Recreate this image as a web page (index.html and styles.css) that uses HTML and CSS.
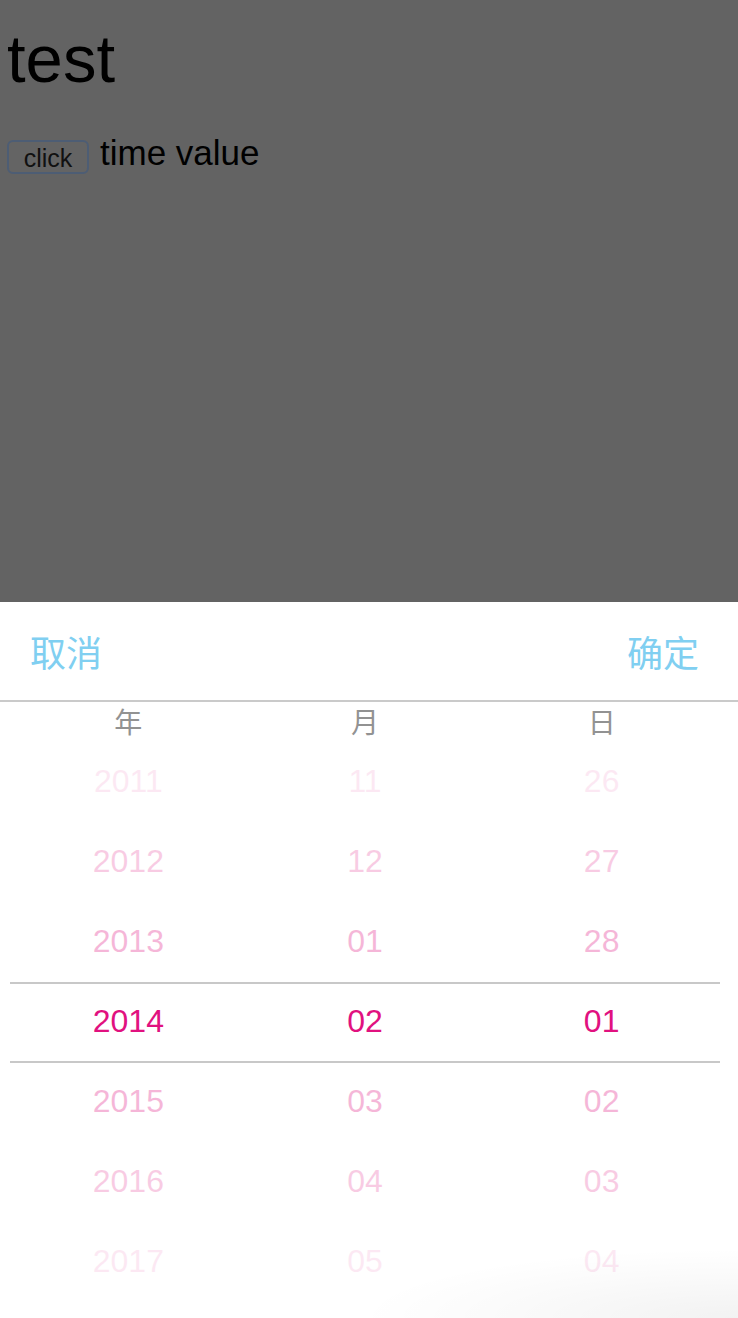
FILE: index.html
```html
<!DOCTYPE html>
<html lang="zh">
<head>
<meta charset="utf-8">
<title>test</title>
<link rel="stylesheet" href="styles.css">
</head>
<body>
<div class="screen">
  <main class="page">
    <h1 class="title">test</h1>
    <div class="controls">
      <button class="btn" type="button">click</button>
      <span class="value">time value</span>
    </div>
  </main>
  <section class="sheet">
    <header class="sheet-head">
      <span class="action">取消</span>
      <span class="action">确定</span>
    </header>
    <div class="wheel">
      <div class="labels">
        <span>年</span><span>月</span><span>日</span>
      </div>
      <div class="cols">
        <ul class="col">
          <li class="o1">2011</li><li class="o2">2012</li><li class="o3">2013</li><li class="sel">2014</li><li class="o3">2015</li><li class="o2">2016</li><li class="o1">2017</li>
        </ul>
        <ul class="col">
          <li class="o1">11</li><li class="o2">12</li><li class="o3">01</li><li class="sel">02</li><li class="o3">03</li><li class="o2">04</li><li class="o1">05</li>
        </ul>
        <ul class="col">
          <li class="o1">26</li><li class="o2">27</li><li class="o3">28</li><li class="sel">01</li><li class="o3">02</li><li class="o2">03</li><li class="o1">04</li>
        </ul>
        <div class="indicator"></div>
      </div>
    </div>
  </section>
</div>
</body>
</html>
```

FILE: styles.css
```css
html, body {
  margin: 0;
  padding: 0;
}
body {
  background: #636363;
  font-family: "Liberation Sans", Arial, "Noto Sans CJK SC", sans-serif;
  color: #000;
}
.screen {
  display: flex;
  flex-direction: column;
  min-height: 100vh;
}
.page {
  flex: 1;
  padding: 25px 0 0 7px;
}
.title {
  margin: 0;
  font-size: 67px;
  line-height: 68px;
  font-weight: 400;
}
.controls {
  display: flex;
  align-items: flex-start;
  gap: 11px;
  margin-top: 40px;
  height: 40px;
}
.btn {
  margin-top: 7px;
  width: 82px;
  height: 34px;
  box-sizing: border-box;
  border: 2px solid #4d5d74;
  border-radius: 6px;
  background: #646464;
  color: #111;
  font-family: "Liberation Sans", Arial, sans-serif;
  font-size: 25px;
  line-height: 28px;
  padding: 2px 0 0;
}
.value {
  font-size: 35px;
  line-height: 40px;
}
.sheet {
  position: relative;
  height: 716px;
  background: #fff;
  overflow: hidden;
}
.sheet::after {
  content: "";
  position: absolute;
  right: 0;
  bottom: 0;
  width: 380px;
  height: 70px;
  background: radial-gradient(ellipse 100% 100% at 100% 100%, rgba(0,0,0,0.05), rgba(0,0,0,0.02) 60%, rgba(0,0,0,0) 100%);
  pointer-events: none;
}
.sheet-head {
  height: 98px;
  border-bottom: 2px solid #cacaca;
  display: flex;
  align-items: center;
  justify-content: space-between;
  padding: 0 39px 0 30px;
}
.action {
  font-family: "Noto Sans CJK SC", sans-serif;
  font-size: 36px;
  color: #80cff1;
}
.wheel {
  padding: 0 18px 0 10px;
}
.labels {
  display: grid;
  grid-template-columns: repeat(3, 1fr);
  height: 39px;
  line-height: 39px;
  text-align: center;
  font-family: "Noto Sans CJK SC", sans-serif;
  font-size: 28px;
  color: #929292;
}
.cols {
  position: relative;
  display: grid;
  grid-template-columns: repeat(3, 1fr);
}
.col {
  list-style: none;
  margin: 0;
  padding: 0;
  text-align: center;
}
.col li {
  height: 80px;
  line-height: 80px;
  font-size: 32px;
  color: #e1117f;
}
.col li.o1 { opacity: 0.09; }
.col li.o2 { opacity: 0.21; }
.col li.o3 { opacity: 0.3; }
.col li.sel { opacity: 1; }
.indicator {
  position: absolute;
  left: 0;
  right: 0;
  top: 241px;
  height: 77px;
  border-top: 2px solid #c8c8c8;
  border-bottom: 2px solid #c8c8c8;
  pointer-events: none;
}
```
